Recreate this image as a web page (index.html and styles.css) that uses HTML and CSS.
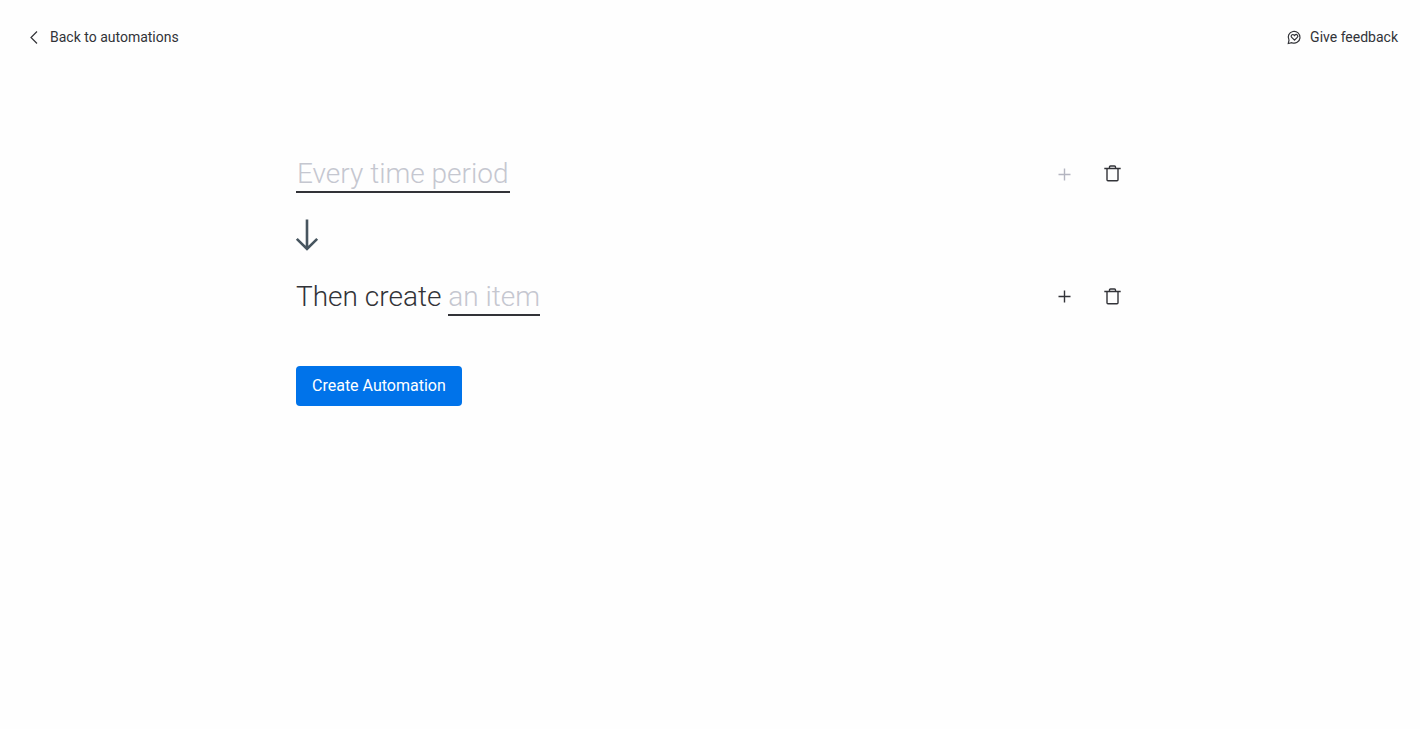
FILE: index.html
```html
<!DOCTYPE html>
<html lang="en">
<head>
  <meta charset="UTF-8">
  <meta name="viewport" content="width=device-width, initial-scale=1.0">
  <title>Create Automation</title>
  <link rel="stylesheet" href="styles.css">
</head>
<body>
  <header class="topbar">
    <a href="#" class="topbar-link">
      <svg class="icon-back" viewBox="0 0 16 16"><path d="M11 2.500L5 8.500l6 6"/></svg>
      Back to automations
    </a>
    <a href="#" class="topbar-link">
      <svg class="icon-feedback" viewBox="0 0 16 16">
        <path d="M3 11.200A5.900 5.900 0 1 1 5.800 13.700L2.300 14.500z"/>
        <path d="M8.500 11.200L5.700 8.400a1.600 1.600 0 0 1 2.300-2.400l.5.6.5-.6a1.600 1.600 0 0 1 2.300 2.400z"/>
      </svg>
      Give feedback
    </a>
  </header>

  <main class="builder">
    <div class="step">
      <div class="sentence">
        <button type="button" class="field field-wide">Every time period</button>
      </div>
      <div class="actions">
        <button type="button" class="icon-btn" aria-label="Add condition" disabled>
          <svg viewBox="0 0 20 20"><path d="M10.500 4.500v12M4.500 10.500h12"/></svg>
        </button>
        <button type="button" class="icon-btn" aria-label="Delete trigger">
          <svg viewBox="0 0 20 20"><path d="M2.300 4.500h16.400M7.500 4.500V3a1 1 0 0 1 1-1h4a1 1 0 0 1 1 1v1.500M5 4.500v11.300a1 1 0 0 0 1 1h9a1 1 0 0 0 1-1V4.500"/></svg>
        </button>
      </div>
    </div>

    <svg class="arrow" viewBox="0 0 24 32"><path d="M11 .5v30M.8 19.800L11 30l10.200-10.200"/></svg>

    <div class="step">
      <div class="sentence">Then create <button type="button" class="field">an item</button></div>
      <div class="actions">
        <button type="button" class="icon-btn" aria-label="Add action">
          <svg viewBox="0 0 20 20"><path d="M10.500 3.500v12M4.500 9.500h12"/></svg>
        </button>
        <button type="button" class="icon-btn" aria-label="Delete action">
          <svg viewBox="0 0 20 20"><path d="M2.300 4.500h16.400M7.500 4.500V3a1 1 0 0 1 1-1h4a1 1 0 0 1 1 1v1.500M5 4.500v11.300a1 1 0 0 0 1 1h9a1 1 0 0 0 1-1V4.500"/></svg>
        </button>
      </div>
    </div>

    <button type="button" class="create-btn">Create Automation</button>
  </main>
</body>
</html>
```
FILE: styles.css
```css
body {
  margin: 0;
  font-family: Roboto, sans-serif;
  background-color: #fefefe;
  color: #323338;
}

button {
  font: inherit;
  border: none;
  background: none;
  cursor: pointer;
}

svg {
  display: block;
  fill: none;
  stroke: currentColor;
  overflow: visible;
}

.topbar {
  display: flex;
  justify-content: space-between;
  align-items: center;
  padding: 27px 22px 27px 26px;
}

.topbar-link {
  display: flex;
  align-items: center;
  gap: 8px;
  font-size: 14px;
  line-height: 20px;
  color: inherit;
  text-decoration: none;
}

.icon-back,
.icon-feedback {
  width: 16px;
  height: 16px;
  stroke-width: 1.2;
}

.builder {
  max-width: 832px;
  margin: 0 auto;
  padding: 83px 0 0 4px;
}

.step {
  display: flex;
  justify-content: space-between;
  align-items: flex-start;
}

.sentence {
  font-size: 28px;
  font-weight: 300;
  line-height: 34px;
}

.field {
  padding: 0;
  border-bottom: 2px solid #323338;
  color: #c5c7d0;
}

.field-wide {
  padding: 0 1px;
}

.actions {
  display: flex;
  gap: 16px;
  padding-top: 1px;
}

.icon-btn {
  padding: 6px;
  color: #323338;
}

.icon-btn svg {
  width: 20px;
  height: 20px;
  stroke-width: 1.4;
}

.icon-btn:disabled {
  color: #b4b5c0;
  cursor: default;
}

.arrow {
  width: 24px;
  height: 32px;
  margin: 26px 0 29px;
  color: #47555f;
  stroke-width: 2.6;
}

.create-btn {
  margin-top: 50px;
  padding: 8px 16px;
  border-radius: 4px;
  background-color: #0073ea;
  color: #fff;
  font-size: 16px;
  line-height: 24px;
}

.create-btn:hover {
  background-color: #0060b9;
}
```
